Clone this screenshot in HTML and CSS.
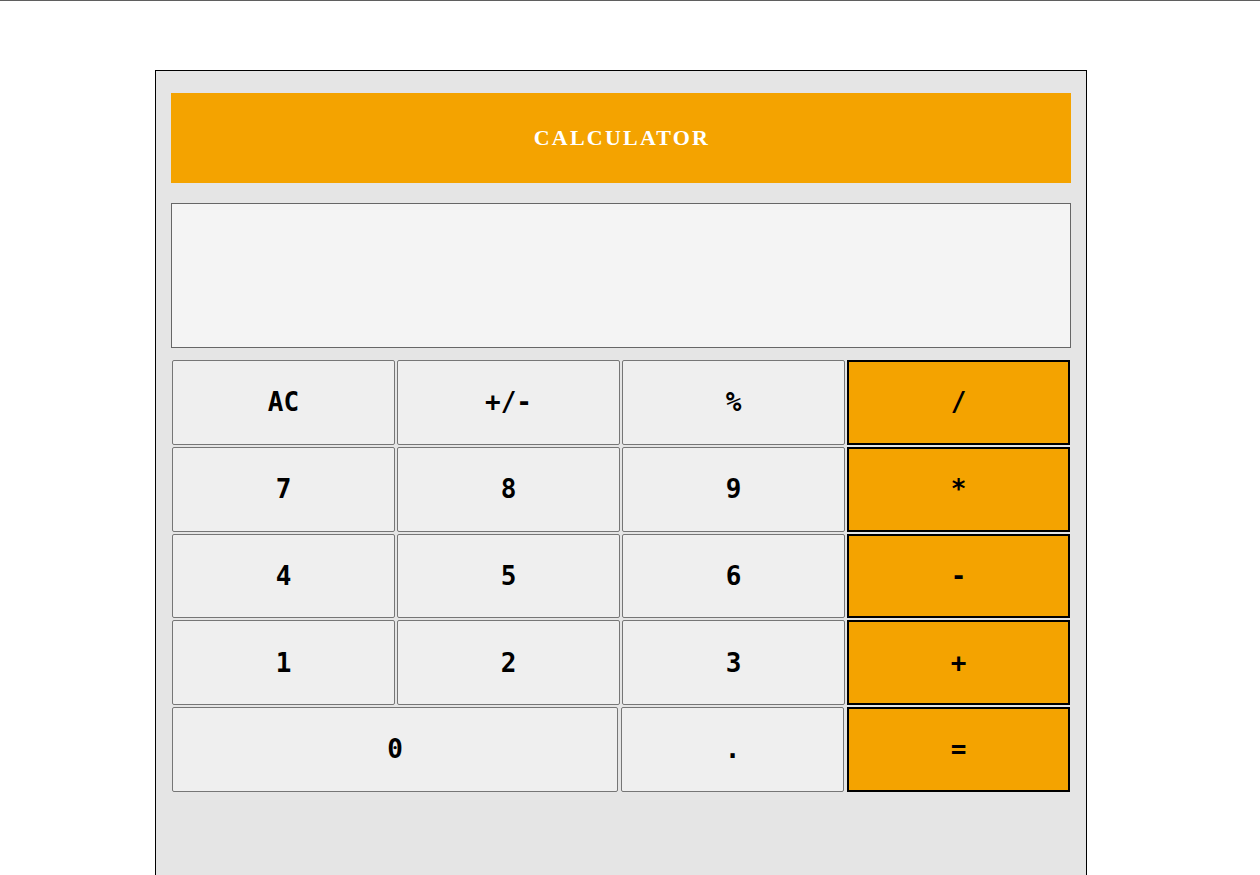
FILE: index.html
```html
<!DOCTYPE html>
<html>
<head>
<meta charset="utf-8">
<link rel="stylesheet" href="styles.css">
</head>
<body>
<div class="topline"></div>
<div class="calc">
  <div class="header"><h1 class="title">CALCULATOR</h1></div>
  <div class="display"></div>
  <div class="keys">
    <button class="key">AC</button>
    <button class="key">+/-</button>
    <button class="key">%</button>
    <button class="key op">/</button>
    <button class="key">7</button>
    <button class="key">8</button>
    <button class="key">9</button>
    <button class="key op">*</button>
    <button class="key">4</button>
    <button class="key">5</button>
    <button class="key">6</button>
    <button class="key op">-</button>
    <button class="key">1</button>
    <button class="key">2</button>
    <button class="key">3</button>
    <button class="key op">+</button>
    <button class="key zero">0</button>
    <button class="key dot">.</button>
    <button class="key op eq">=</button>
  </div>
</div>
</body>
</html>
```
FILE: styles.css
```css
html, body {
  margin: 0;
  padding: 0;
  background: #ffffff;
}
body {
  overflow: hidden;
  height: 875px;
}
.topline {
  height: 0;
  border-top: 1px solid #5f5f5f;
}
.calc {
  box-sizing: border-box;
  width: 932px;
  height: 830px;
  margin: 69px 0 0 155px;
  border: 1px solid #000;
  background: #e5e5e5;
  padding: 22px 15px 0 15px;
}
.header {
  height: 90px;
  background: #f4a300;
  display: flex;
  align-items: center;
  justify-content: center;
}
.title {
  margin: 0;
  color: #ffffff;
  font-family: "Liberation Serif", "Times New Roman", serif;
  font-weight: bold;
  font-size: 22px;
  letter-spacing: 2.2px;
  padding-left: 2px;
}
.display {
  box-sizing: border-box;
  margin-top: 20px;
  height: 145px;
  border: 1px solid #666666;
  background: #f4f4f4;
}
.keys {
  display: flex;
  flex-wrap: wrap;
  margin-top: 11px;
}
.key {
  box-sizing: border-box;
  width: 223px;
  height: 84.75px;
  margin: 1px;
  padding: 0;
  border: 1px solid #767676;
  border-radius: 2px;
  background: #efefef;
  color: #000;
  font-family: "DejaVu Sans Mono", monospace;
  font-weight: bold;
  font-size: 26px;
}
.key.op {
  background: #f4a300;
  border: 2px solid #000;
  border-radius: 0;
}
.key.zero {
  width: 446px;
}
.key.dot {
  margin-left: 2px;
}
.key.eq {
  margin-left: 2px;
}
```
